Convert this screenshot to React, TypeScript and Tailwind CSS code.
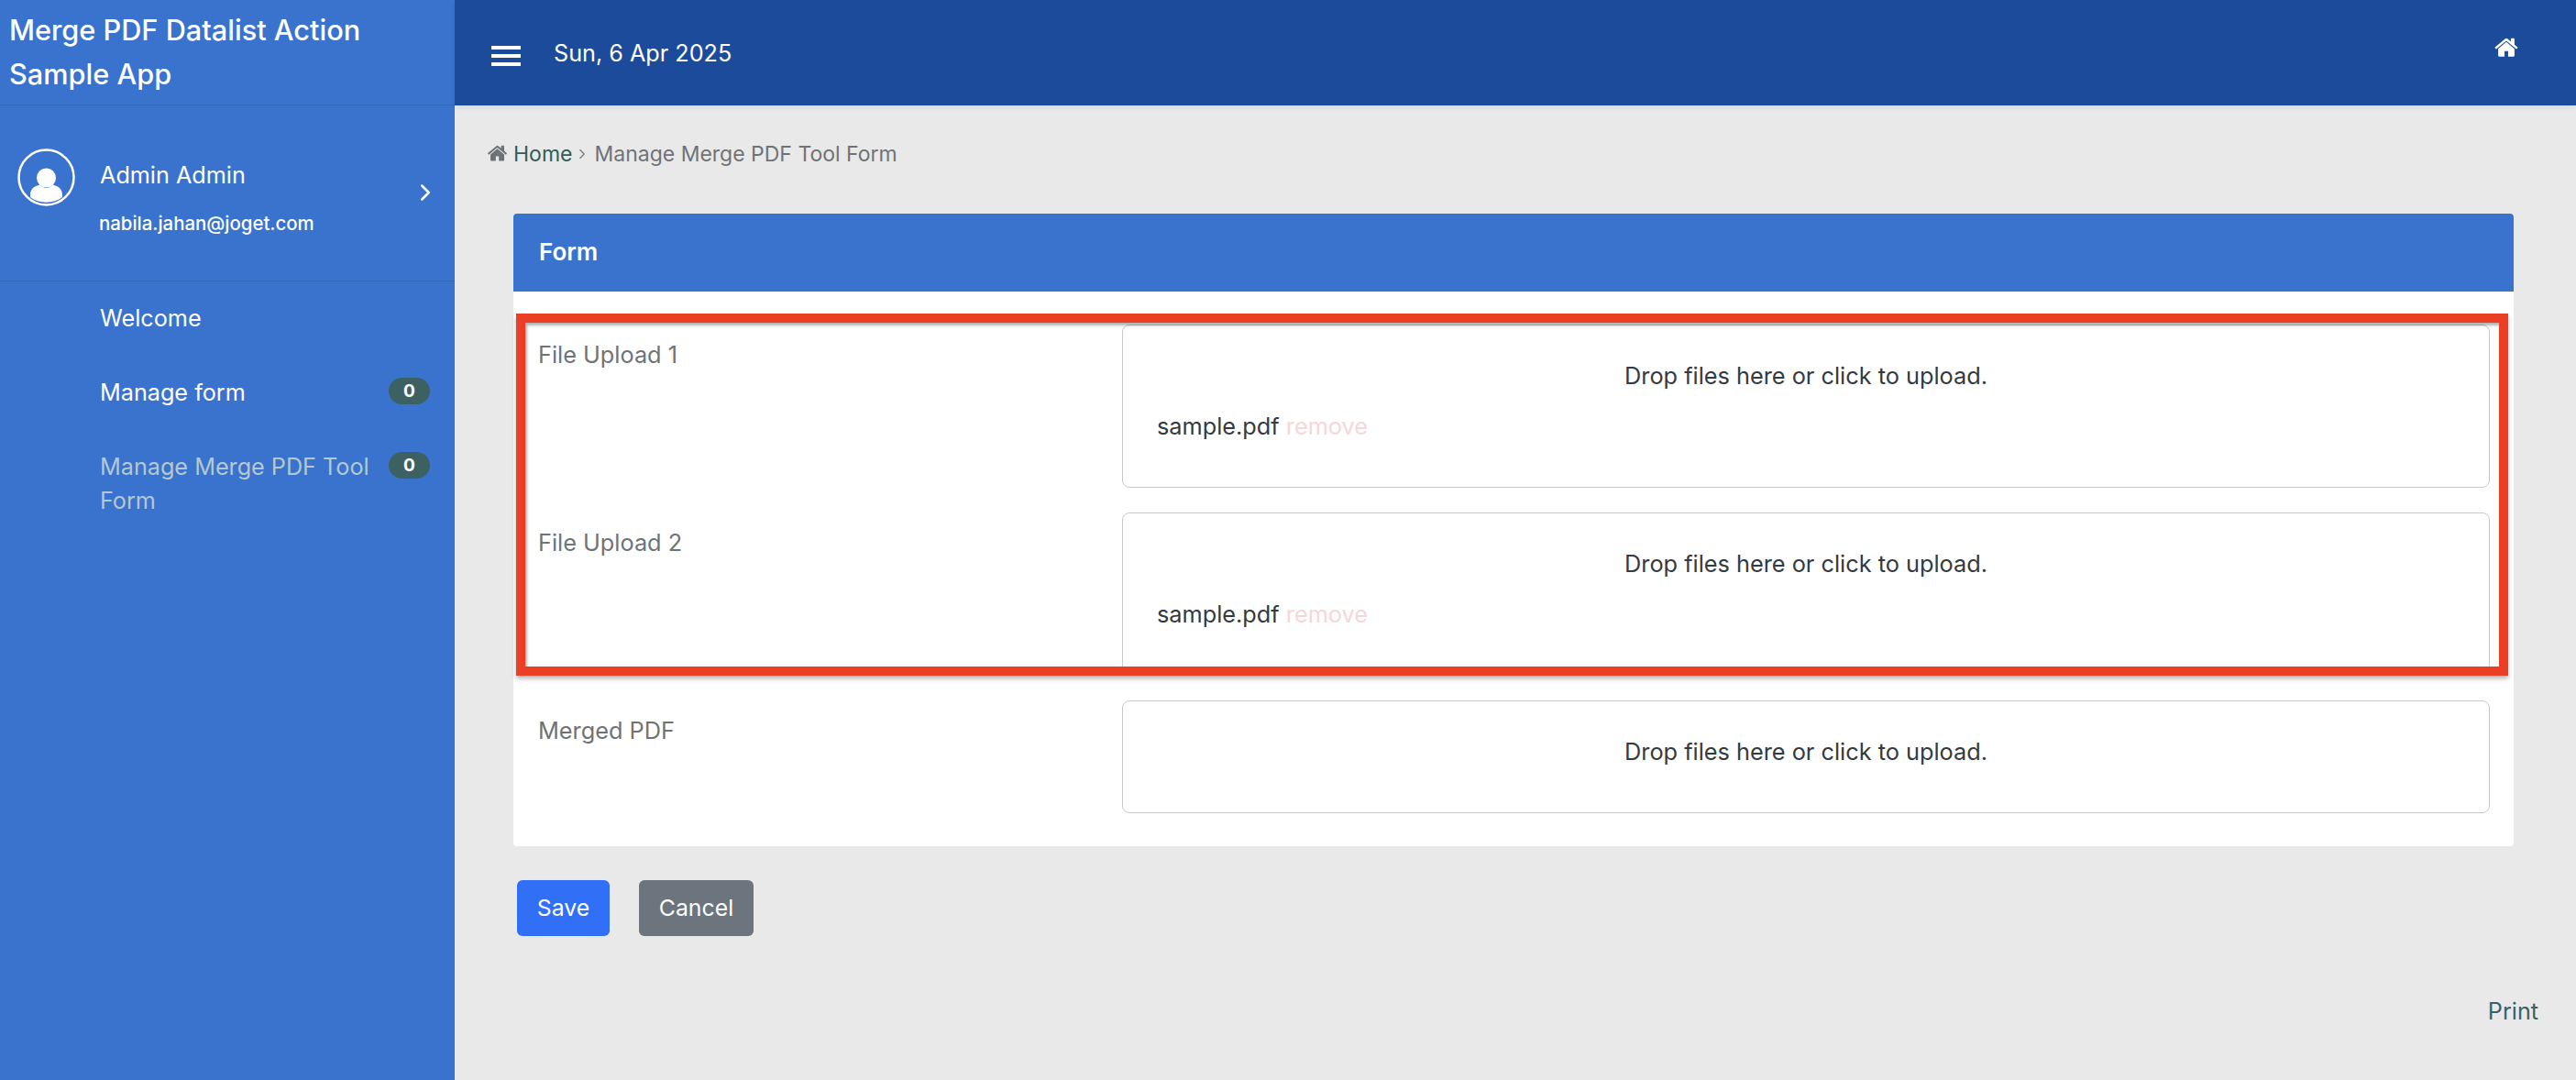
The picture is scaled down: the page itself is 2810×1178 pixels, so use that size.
import React from 'react';
import { ChevronRight } from 'lucide-react';

const homePath =
  'M1472 992v480q0 26-19 45t-45 19h-384v-384h-256v384h-384q-26 0-45-19t-19-45v-480q0-1 .5-3t.5-3l575-474 575 474q1 2 1 6zm223-69l-62 74q-8 9-21 11h-3q-13 0-21-7l-692-577-692 577q-12 8-24 7-13-2-21-11l-62-74q-8-10-7-23.5t11-21.5l719-599q32-26 76-26t76 26l244 204v-195q0-14 9-23t23-9h192q14 0 23 9t9 23v408l219 182q10 8 11 21.5t-7 23.5z';

function HomeIcon({ className }: { className?: string }) {
  return (
    <svg viewBox="90 200 1612 1360" className={className} fill="currentColor">
      <path d={homePath} />
    </svg>
  );
}

function Avatar() {
  return (
    <svg viewBox="0 0 63 63" className="h-[63px] w-[63px] shrink-0">
      <circle cx="31.5" cy="31.5" r="30" fill="none" stroke="white" strokeWidth="2.5" />
      <ellipse cx="31.5" cy="32" rx="10.5" ry="10.5" fill="white" />
      <path d="M14 53 L14 51 C14 44 18 41 24.5 39.5 C28.5 44 34.5 44 38.5 39.5 C45 41 49 44 49 51 L49 53 C40 60.5 23 60.5 14 53 Z" fill="white" />
    </svg>
  );
}

function Badge() {
  return (
    <span className="flex h-[29px] w-[45px] shrink-0 items-center justify-center rounded-full bg-[#3d6163] text-[19px] font-bold leading-none text-white">
      0
    </span>
  );
}

function Sidebar() {
  return (
    <aside className="flex w-[496px] shrink-0 flex-col bg-[#3973cd] text-white">
      <div className="h-[115px] border-b border-[#3468ba] pl-[10px] pt-[9px] text-[30.7px] font-medium leading-[48px]">
        Merge PDF Datalist Action
        <br />
        Sample App
      </div>
      <div className="flex h-[192px] border-b border-[#3468ba] pl-[19px] pr-[27px] pt-[47px]">
        <Avatar />
        <div className="ml-[27px] flex-1">
          <div className="mt-[11px] text-[25.2px] leading-[36px]">Admin Admin</div>
          <div className="-ml-px mt-[20px] text-[20.4px] font-medium leading-[30px]">nabila.jahan@joget.com</div>
        </div>
        <ChevronRight className="-mr-[10px] mt-[33px] h-[30px] w-[30px]" strokeWidth={2} />
      </div>
      <nav className="flex flex-col pl-[109px] pr-[27px] pt-[22px] text-[25.2px] leading-[37px]">
        <div className="h-[81px]">Welcome</div>
        <div className="flex h-[81px] justify-between">
          <span>Manage form</span>
          <span className="mt-[2px]"><Badge /></span>
        </div>
        <div className="flex justify-between text-[#b4c8d0]">
          <span className="w-[300px]">Manage Merge PDF Tool Form</span>
          <span className="mt-[2px]"><Badge /></span>
        </div>
      </nav>
    </aside>
  );
}

function Topbar() {
  return (
    <header className="flex h-[115px] shrink-0 items-start bg-[#1d4b9b] pl-[40px] pr-[63px] text-white shadow-[0_2px_6px_rgba(0,0,0,0.08)]">
      <div className="mt-[50px] flex h-[22px] w-[32px] flex-col justify-between">
        <span className="h-[4px] bg-white" />
        <span className="h-[4px] bg-white" />
        <span className="h-[4px] bg-white" />
      </div>
      <div className="ml-[36px] mt-[40px] text-[25.2px] leading-[36px]">Sun, 6 Apr 2025</div>
      <HomeIcon className="ml-auto mt-[41px] h-[21px] w-[26px]" />
    </header>
  );
}

function Dropzone({ file, className }: { file?: boolean; className: string }) {
  return (
    <div className={`rounded-[8px] border border-[#c8c9cc] bg-white pt-[37px] text-[25.3px] leading-[36px] text-[#343a40] ${className}`}>
      <div className="text-center">Drop files here or click to upload.</div>
      {file && (
        <div className="mt-[19px] pl-[37px]">
          sample.pdf <span className="text-[#f5d7da]">remove</span>
        </div>
      )}
    </div>
  );
}

function Row({ label, file, className }: { label: string; file?: boolean; className: string }) {
  return (
    <div className="grid grid-cols-[637px_1fr]">
      <label className="pt-[15px] text-[25.3px] leading-[36px] text-[#6f7377]">{label}</label>
      <Dropzone file={file} className={className} />
    </div>
  );
}

export default function App() {
  return (
    <div className="flex h-[1178px] w-full overflow-hidden bg-[#e9e9e9] font-['Inter',sans-serif]">
      <Sidebar />
      <main className="flex min-w-0 flex-1 flex-col">
        <Topbar />
        <div className="flex h-[118px] shrink-0 items-start pl-[36px] pt-[36px] text-[23px] leading-[34px] text-[#6f7377]">
          <HomeIcon className="mr-[7px] mt-[7px] h-[18px] w-[21px]" />
          <span className="text-[#2f5d5a]">Home</span>
          <ChevronRight className="ml-[2px] mt-[8px] h-[18px] w-[18px]" strokeWidth={1.5} />
          <span className="ml-[4px]">Manage Merge PDF Tool Form</span>
        </div>
        <section className="relative ml-[64px] mr-[68px] rounded-[4px] bg-white">
          <div className="flex h-[85px] items-center rounded-t-[4px] bg-[#3973cd] pb-[2px] pl-[28px] text-[26px] font-semibold text-white">
            Form
          </div>
          <div className="flex flex-col gap-[27px] pb-[36px] pl-[27px] pr-[26px] pt-[36px]">
            <Row label="File Upload 1" file className="h-[178px]" />
            <Row label="File Upload 2" file className="h-[178px]" />
            <Row label="Merged PDF" className="h-[123px]" />
          </div>
          <div className="absolute left-[3px] right-[6px] top-[109px] h-[395px] border-[10px] border-[#ea3f25] shadow-[0_3px_5px_rgba(0,0,0,0.3),inset_2px_3px_3px_rgba(0,0,0,0.3)]" />
        </section>
        <div className="ml-[68px] mt-[37px] flex gap-[32px] text-[24.8px] text-white">
          <button className="h-[61px] w-[101px] rounded-[6px] bg-[#316ff6]">Save</button>
          <button className="h-[61px] w-[125px] rounded-[6px] bg-[#6c757d]">Cancel</button>
        </div>
        <div className="mr-[41px] mt-[64px] text-right text-[25.2px] leading-[36px] text-[#3d6163]">Print</div>
      </main>
    </div>
  );
}
